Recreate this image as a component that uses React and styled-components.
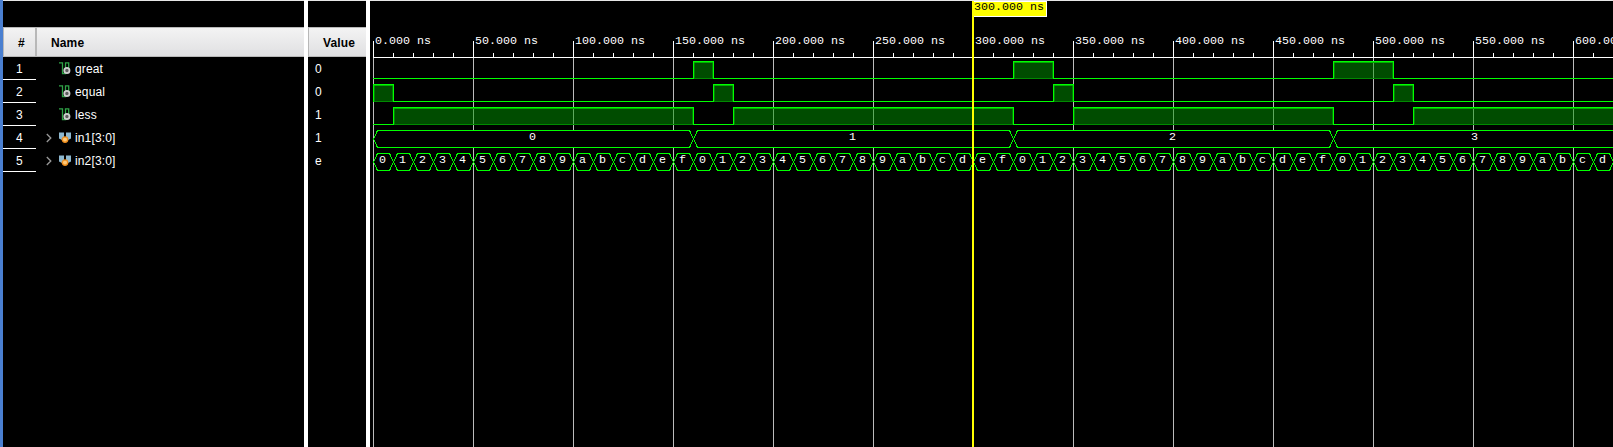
import React from 'react';
import styled, { createGlobalStyle } from 'styled-components';

const GlobalStyle = createGlobalStyle`
  html, body { margin: 0; background: #000; overflow: hidden; }
`;

const Viewer = styled.div`
  display: flex;
  box-sizing: border-box;
  width: 1613px;
  height: 447px;
  background: #000;
  border-left: 3px solid #4a7fd0;
  font-family: 'Liberation Sans', Arial, sans-serif;
  font-size: 12px;
  letter-spacing: 0.14px;
  color: #fff;
  overflow: hidden;
`;

const Column = styled.section`
  display: flex;
  flex-direction: column;
  flex: none;
  box-sizing: border-box;
  width: ${(p) => p.$width}px;
  border-top: 1px solid #e6e6e6;
  padding-top: 26px;
`;

const Divider = styled.div`
  flex: none;
  width: 4px;
  background: #fff;
`;

const Header = styled.div`
  display: flex;
  box-sizing: border-box;
  height: 30px;
  border: 1px solid #b8b8b8;
  border-width: 1px 0 1px 1px;
  background: linear-gradient(#f3f3f3, #e0e0e2);
  color: #000;
  font-weight: bold;
  line-height: 30px;
`;

const HeaderCell = styled.div`
  box-sizing: border-box;
  flex: ${(p) => (p.$width ? 'none' : 1)};
  width: ${(p) => (p.$width ? `${p.$width}px` : 'auto')};
  padding-left: ${(p) => p.$pad}px;
  border-right: ${(p) => (p.$width ? '2px solid #b8b8b8' : '0')};
`;

const Row = styled.div`
  display: flex;
  height: 23px;
  line-height: 24px;
`;

const Index = styled.div`
  box-sizing: border-box;
  width: 33px;
  border-bottom: 1px solid #fff;
  text-align: center;
`;

const Expander = styled.div`
  display: flex;
  align-items: center;
  width: 23px;
  padding-left: 10px;
  box-sizing: border-box;
`;

const IconSlot = styled.div`
  display: flex;
  align-items: center;
  width: 16px;
`;

const Value = styled.div`
  height: 23px;
  line-height: 24px;
  padding-left: 7px;
`;

const Plot = styled.svg`
  display: block;
  flex: none;
  width: 1243px;
  height: 447px;
  letter-spacing: 0;
`;

const Mono = styled.text`
  font-family: 'Liberation Mono', 'Courier New', monospace;
  font-size: 11.67px;
  fill: ${(p) => p.$color || '#fff'};
`;

const Chevron = () => (
  <svg width="6" height="10" viewBox="0 0 6 10">
    <path d="M.8 1 4.8 5 .8 9" fill="none" stroke="#999" strokeWidth="1.3" />
  </svg>
);

const SignalIcon = () => (
  <svg width="12" height="13" viewBox="0 0 12 13">
    <path d="M0 .8H3.5V11.5H6.5V.8H9.7V7" fill="none" stroke="#2fa347" strokeWidth="1.3" />
    <circle cx="7.9" cy="8.5" r="2.6" fill="#5c5c5c" stroke="#cfcfcf" strokeWidth="1.8" />
  </svg>
);

const BusIcon = () => (
  <svg width="12" height="12" viewBox="0 0 12 12">
    <path d="M0 .6H5V6L3 8 0 6.4ZM7 .6H12V6.4L9 8 7 6Z" fill="#8eb8cf" />
    <circle cx="6" cy="7.6" r="2.7" fill="#ffc978" stroke="#ef8e1e" strokeWidth="1.4" />
  </svg>
);

const SIGNALS = [
  { name: 'great', value: '0', high: [[160, 170], [320, 340], [480, 510]] },
  { name: 'equal', value: '0', high: [[0, 10], [170, 180], [340, 350], [510, 520]] },
  { name: 'less', value: '1', high: [[10, 160], [180, 320], [350, 480], [520, 640]] },
  { name: 'in1[3:0]', value: '1', bus: true, step: 160, labels: [159, 479, 799, 1101] },
  { name: 'in2[3:0]', value: 'e', bus: true, step: 10 },
];

const ORIGIN = 3;
const END = 1260;
const at = (ns) => ORIGIN + ns * 2;

const Digital = ({ top, high }) => {
  const bottom = top + 17;
  let d = `M${ORIGIN} ${bottom + 0.5}`;
  high.forEach(([a, b]) => {
    d += `H${at(a) + 0.5}V${top + 0.5}H${at(b) + 0.5}V${bottom + 0.5}`;
  });
  d += `H${END}`;
  return (
    <g shapeRendering="crispEdges">
      {high.map(([a, b]) => (
        <g key={a}>
          <rect x={at(a)} y={top} width={(b - a) * 2 + 1} height="18" fill="#009800" fillOpacity=".5" />
          <rect x={at(a) + 1.5} y={top + 1.5} width={(b - a) * 2 - 2} height="16" fill="none" stroke="#008c00" strokeOpacity=".85" />
          <path d={`M${at(a) + 1} ${top + 1.5}H${at(b)}`} stroke="#00b000" />
        </g>
      ))}
      <path d={d} fill="none" stroke="#00ff00" />
      {high.map(([a, b]) => (
        <path key={a} d={`M${at(a) + 1} ${bottom + 0.5}H${at(b)}`} stroke="#008a00" />
      ))}
    </g>
  );
};

const Bus = ({ top, step, labels }) => {
  const cells = [];
  for (let i = 0; i * step < 620; i += 1) {
    const a = at(i * step) + 0.5;
    const b = a + step * 2;
    const t = top + 0.5;
    const m = top + 9;
    const e = top + 17.5;
    cells.push(
      <g key={i}>
        <path
          d={`M${a} ${m}L${a + 4} ${t}H${b - 4}L${b} ${m}L${b - 4} ${e}H${a + 4}Z`}
          fill="#000"
          stroke="#00ff00"
          shapeRendering="crispEdges"
        />
        <Mono x={labels ? labels[i] : a + 5.5} y={top + 10}>
          {(i % 16).toString(16)}
        </Mono>
      </g>,
    );
  }
  return <g>{cells}</g>;
};

const Waveform = () => (
  <Plot viewBox="0 0 1243 447">
    <rect width="1243" height="1" fill="#e6e6e6" />
    <g shapeRendering="crispEdges">
      {Array.from({ length: 13 }, (_, i) => (
        <g key={i}>
          <rect x={at(i * 50)} y="58" width="1" height="389" fill="#bcbcbc" />
          <rect x={at(i * 50)} y="41" width="1" height="17" fill="#fff" />
        </g>
      ))}
      {Array.from({ length: 63 }, (_, i) => (
        <rect key={i} x={at(i * 10)} y="53" width="1" height="4" fill="#fff" />
      ))}
      <rect x={ORIGIN} y="57" width="1240" height="1" fill="#fff" />
    </g>
    {Array.from({ length: 13 }, (_, i) => (
      <Mono key={i} x={at(i * 50) + 2} y="44">{`${i * 50}.000 ns`}</Mono>
    ))}
    {SIGNALS.map((s, i) =>
      s.bus ? (
        <Bus key={s.name} top={61 + i * 23} step={s.step} labels={s.labels} />
      ) : (
        <Digital key={s.name} top={61 + i * 23} high={s.high} />
      ),
    )}
    <rect x="603.5" y="1.5" width="73" height="15" fill="#ffff00" stroke="#fff" />
    <rect x="602" y="1" width="2" height="446" fill="#ffff00" />
    <Mono x="604" y="10" $color="#000">300.000 ns</Mono>
  </Plot>
);

export default function App() {
  return (
    <>
      <GlobalStyle />
      <Viewer>
        <Column $width={301}>
          <Header>
            <HeaderCell $width={33} $pad={14}>#</HeaderCell>
            <HeaderCell $pad={14}>Name</HeaderCell>
          </Header>
          {SIGNALS.map((s, i) => (
            <Row key={s.name}>
              <Index>{i + 1}</Index>
              <Expander>{s.bus && <Chevron />}</Expander>
              <IconSlot>{s.bus ? <BusIcon /> : <SignalIcon />}</IconSlot>
              <span>{s.name}</span>
            </Row>
          ))}
        </Column>
        <Divider />
        <Column $width={58}>
          <Header>
            <HeaderCell $pad={14}>Value</HeaderCell>
          </Header>
          {SIGNALS.map((s) => (
            <Value key={s.name}>{s.value}</Value>
          ))}
        </Column>
        <Divider />
        <Waveform />
      </Viewer>
    </>
  );
}
